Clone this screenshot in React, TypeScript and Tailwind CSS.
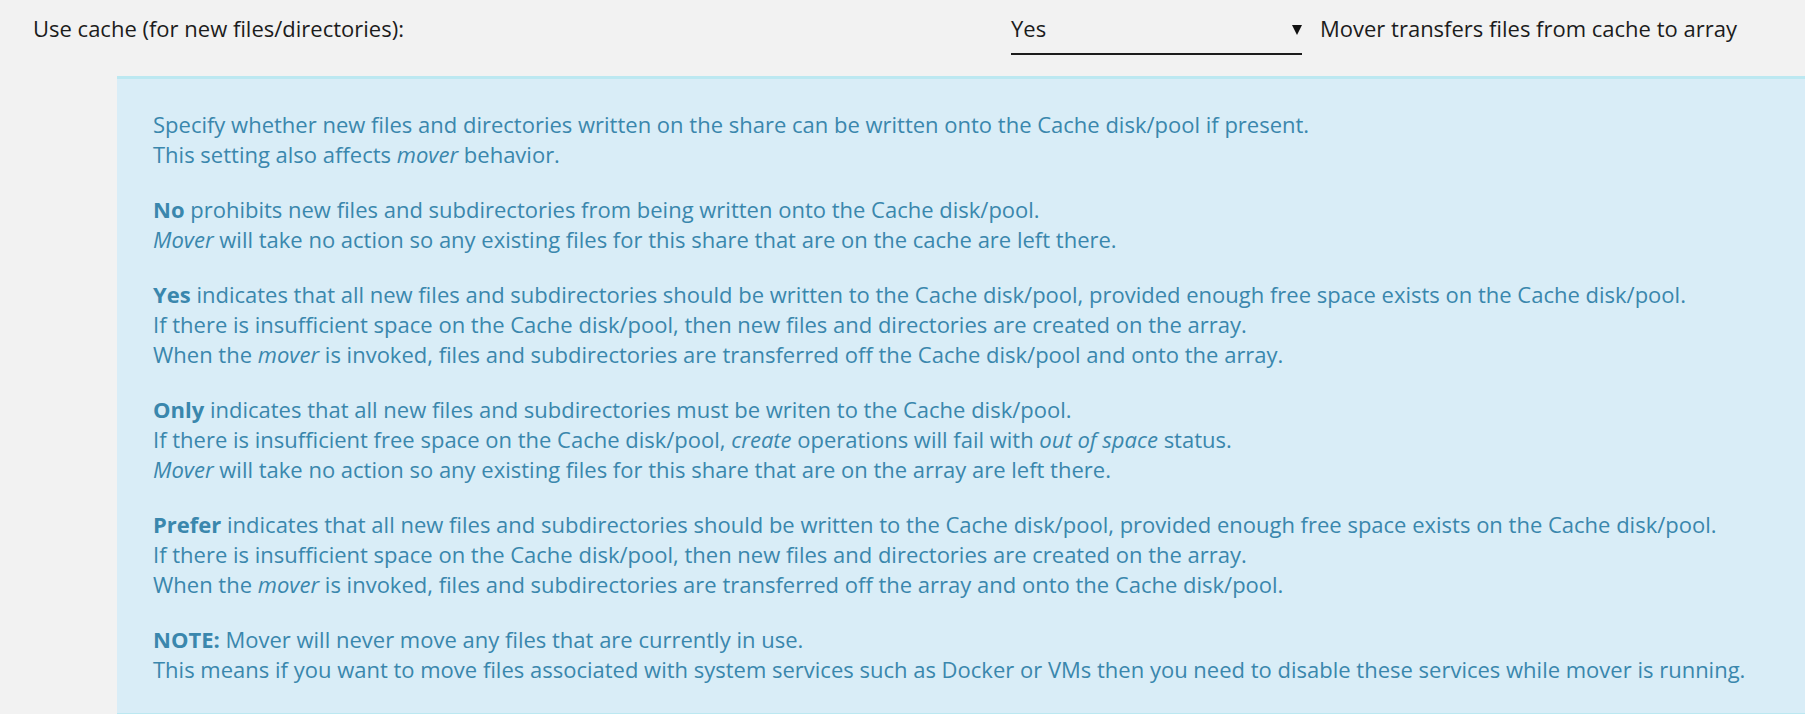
import React from "react";

const font = { fontFamily: "'Open Sans', 'Liberation Sans', sans-serif" };

const SettingRow = () => (
  <div className="flex items-start pt-[13px] pl-[33px] h-[76px] text-[22px] leading-[30px] text-[#1c1c1c]">
    <div className="w-[978px]">Use cache (for new files/directories):</div>
    <div className="relative w-[291px] h-[42px] border-b-2 border-[#1c1c1c]">
      <span>Yes</span>
      <span className="absolute right-0 top-[12px] w-0 h-0 border-l-[5px] border-r-[5px] border-t-[10px] border-l-transparent border-r-transparent border-t-[#111]" />
    </div>
    <div className="ml-[18px]">Mover transfers files from cache to array</div>
  </div>
);

const HelpBlock = () => (
  <div className="ml-[117px] bg-[#d9edf7] border-t-[3px] border-b-[3px] border-[#bce8f1] pt-[30px] pb-[29px] pl-[36px] text-[#3a87ad] text-[22px] leading-[30px] flex flex-col gap-[25px]">
    <p>
      Specify whether new files and directories written on the share can be written onto the Cache disk/pool if present.
      <br />
      This setting also affects <i>mover</i> behavior.
    </p>
    <p>
      <b>No</b> prohibits new files and subdirectories from being written onto the Cache disk/pool.
      <br />
      <i>Mover</i> will take no action so any existing files for this share that are on the cache are left there.
    </p>
    <p>
      <b>Yes</b> indicates that all new files and subdirectories should be written to the Cache disk/pool, provided enough free space exists on the Cache disk/pool.
      <br />
      If there is insufficient space on the Cache disk/pool, then new files and directories are created on the array.
      <br />
      When the <i>mover</i> is invoked, files and subdirectories are transferred off the Cache disk/pool and onto the array.
    </p>
    <p>
      <b>Only</b> indicates that all new files and subdirectories must be writen to the Cache disk/pool.
      <br />
      If there is insufficient free space on the Cache disk/pool, <i>create</i> operations will fail with <i>out of space</i> status.
      <br />
      <i>Mover</i> will take no action so any existing files for this share that are on the array are left there.
    </p>
    <p>
      <b>Prefer</b> indicates that all new files and subdirectories should be written to the Cache disk/pool, provided enough free space exists on the Cache disk/pool.
      <br />
      If there is insufficient space on the Cache disk/pool, then new files and directories are created on the array.
      <br />
      When the <i>mover</i> is invoked, files and subdirectories are transferred off the array and onto the Cache disk/pool.
    </p>
    <p>
      <b>NOTE:</b> Mover will never move any files that are currently in use.
      <br />
      This means if you want to move files associated with system services such as Docker or VMs then you need to disable these services while mover is running.
    </p>
  </div>
);

export default function App() {
  return (
    <div className="min-h-screen bg-[#f2f2f2] overflow-hidden" style={font}>
      <SettingRow />
      <HelpBlock />
    </div>
  );
}
